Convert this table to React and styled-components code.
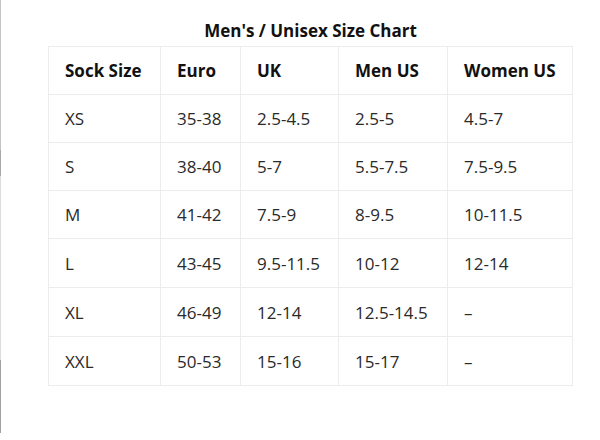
import React from "react";
import styled, { createGlobalStyle } from "styled-components";

const GlobalStyle = createGlobalStyle`
  html, body {
    margin: 0;
    padding: 0;
    background: #fff;
  }
  body {
    font-family: "Open Sans", "Liberation Sans", sans-serif;
    color: #222;
  }
`;

const Page = styled.div`
  width: 600px;
  height: 440px;
  box-sizing: border-box;
  padding: 19px 0 0 48px;
  background:
    linear-gradient(
      to bottom,
      #c4c4c4 0,
      #c4c4c4 150px,
      #a8a8a8 150px,
      #a8a8a8 176px,
      #dcdcdc 176px,
      #dcdcdc 360px,
      #a0a0a0 360px,
      #a0a0a0 433px,
      transparent 433px
    )
    left top / 1px 100% no-repeat;
`;

const Chart = styled.table`
  width: 524px;
  border-collapse: collapse;
  table-layout: fixed;
  font-size: 17px;
`;

const Caption = styled.caption`
  font-size: 17px;
  line-height: 24px;
  font-weight: 700;
  color: #111;
  padding-bottom: 3px;
  text-align: center;
`;

const Row = styled.tr`
  height: ${(p) => (p.$tall ? 49 : 48)}px;
`;

const Cell = styled.td`
  padding: 0 0 0 16px;
  border: 1px solid #ececec;
  vertical-align: middle;
  text-align: left;
  font-weight: ${(p) => (p.$head ? 700 : 400)};
  color: ${(p) => (p.$head ? "#111" : "#2a2a2a")};
  white-space: nowrap;
`;

const widths = [112, 80, 98, 109, 125];
const header = ["Sock Size", "Euro", "UK", "Men US", "Women US"];
const rows = [
  ["XS", "35-38", "2.5-4.5", "2.5-5", "4.5-7"],
  ["S", "38-40", "5-7", "5.5-7.5", "7.5-9.5"],
  ["M", "41-42", "7.5-9", "8-9.5", "10-11.5"],
  ["L", "43-45", "9.5-11.5", "10-12", "12-14"],
  ["XL", "46-49", "12-14", "12.5-14.5", "–"],
  ["XXL", "50-53", "15-16", "15-17", "–"],
];

export default function App() {
  return (
    <>
      <GlobalStyle />
      <Page>
        <Chart>
          <Caption>Men's / Unisex Size Chart</Caption>
          <colgroup>
            {widths.map((w, i) => (
              <col key={i} style={{ width: w }} />
            ))}
          </colgroup>
          <thead>
            <Row>
              {header.map((h) => (
                <Cell as="th" $head key={h}>
                  {h}
                </Cell>
              ))}
            </Row>
          </thead>
          <tbody>
            {rows.map((r, ri) => (
              <Row key={r[0]} $tall={ri >= 3}>
                {r.map((c, i) => (
                  <Cell key={i}>{c}</Cell>
                ))}
              </Row>
            ))}
          </tbody>
        </Chart>
      </Page>
    </>
  );
}
